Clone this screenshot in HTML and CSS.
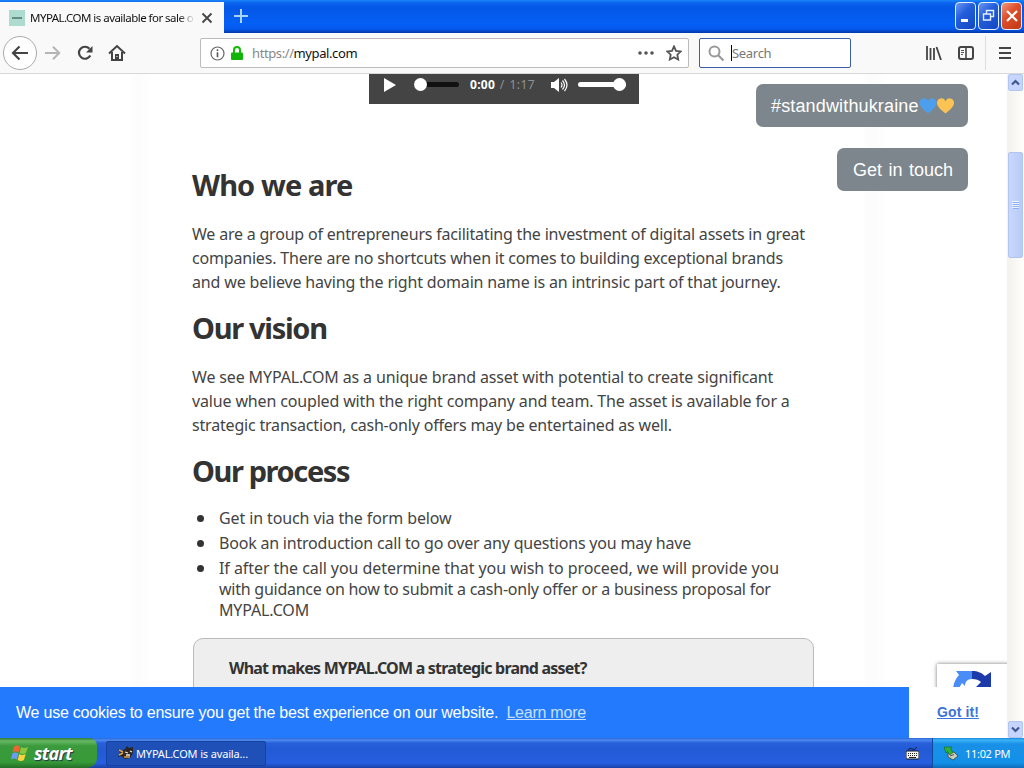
FILE: index.html
```
<!DOCTYPE html>
<html lang="en">
<head>
<meta charset="utf-8"/>
<title>MYPAL.COM is available for sale</title>
<link rel="stylesheet" href="styles.css">
</head>

<body>
<div class="titlebar">
    <div class="tab">
        <span class="favicon"><i></i></span>
        <span class="tab-title">MYPAL.COM is available for sale o</span>
        <svg width="12" height="12" viewBox="0 0 12 12"><path d="M1.5 1.5l9 9M10.5 1.5l-9 9" stroke="#444" stroke-width="1.8"/></svg>
    </div>
    <svg class="newtab" width="14" height="14" viewBox="0 0 14 14"><path d="M7 0v14M0 7h14" stroke="#a9d4ff" stroke-width="2"/></svg>
    <div class="winbtns">
        <span class="winbtn"><svg width="20" height="28" viewBox="0 0 20 28"><path d="M5 18.5h7" stroke="#fff" stroke-width="3"/></svg></span>
        <span class="winbtn"><svg width="20" height="28" viewBox="0 0 20 28"><path d="M7.500 11.500v-3h7v6h-3M4.500 12h7v6h-7z" fill="none" stroke="#e4efff" stroke-width="1.400"/></svg></span>
        <span class="winbtn close"><svg width="20" height="28" viewBox="0 0 20 28"><path d="M5 9l10 10M15 9L5 19" stroke="#fff" stroke-width="2.200"/></svg></span>
    </div>
</div>

<div class="toolbar">
    <div class="nav">
        <span class="back"><svg width="18" height="16" viewBox="0 0 18 16"><path d="M17 8H2M8.500 1.500L2 8l6.500 6.500" fill="none" stroke="#444" stroke-width="2.200"/></svg></span>
        <svg width="18" height="16" viewBox="0 0 18 16"><path d="M1 8h14M9 1.800L15.200 8 9 14.200" fill="none" stroke="#b5b5b5" stroke-width="2"/></svg>
        <svg width="18" height="18" viewBox="0 0 18 18"><path d="M14.300 11.500A6 6 0 1 1 13.500 4.800" fill="none" stroke="#444" stroke-width="2.200"/><path d="M16.500 2v6.500H10z" fill="#444"/></svg>
        <svg width="18" height="18" viewBox="0 0 18 18"><path d="M1 9.500L9 2l8 7.500M4 8v8h10V8" fill="none" stroke="#444" stroke-width="2"/><path d="M7 16v-6h4v6z" fill="#444"/><path d="M8.500 12.500h1" stroke="#fff"/></svg>
    </div>
    <div class="urlbar">
        <svg width="15" height="15" viewBox="0 0 15 15"><circle cx="7.500" cy="7.500" r="6.500" fill="none" stroke="#666" stroke-width="1.200"/><path d="M7.500 3.200v1.800M7.500 6.300v5" stroke="#555" stroke-width="1.600"/></svg>
        <svg class="lock" width="12" height="14" viewBox="0 0 12 14"><path d="M3 7V4a3 3 0 0 1 6 0v3" fill="none" stroke="#12bc00" stroke-width="2"/><rect y="6.500" width="12" height="7.500" rx="1" fill="#12b40a"/></svg>
        <span class="url"><em>https://</em>mypal.com</span>
        <svg class="dots" width="16" height="4" viewBox="0 0 16 4"><g fill="#555"><circle cx="2" cy="2" r="1.800"/><circle cx="8" cy="2" r="1.800"/><circle cx="14" cy="2" r="1.800"/></g></svg>
        <svg class="star" width="16" height="16" viewBox="0 0 16 16"><path d="M8 1.400l2 4.400 4.800.6-3.500 3.300.9 4.800L8 12.200l-4.200 2.300.9-4.800L1.200 6.400 6 5.800z" fill="none" stroke="#555" stroke-width="1.800"/></svg>
    </div>
    <div class="search">
        <svg width="17" height="17" viewBox="0 0 17 17"><circle cx="6.500" cy="6.500" r="5" fill="none" stroke="#999" stroke-width="2"/><path d="M10 10l5.500 5.500" stroke="#999" stroke-width="2.200"/></svg>
        <span class="caret"></span><span>Search</span>
    </div>
    <div class="tools">
        <svg width="16" height="14" viewBox="0 0 16 14"><path d="M1 0v14M4.500 2v12M8 2v12M10.500 1l4.500 13" stroke="#444" stroke-width="1.800"/></svg>
        <svg width="16" height="14" viewBox="0 0 16 14"><rect x="1" y="1" width="14" height="12" rx="2" fill="none" stroke="#444" stroke-width="2"/><path d="M8 1v12" stroke="#444" stroke-width="1.600"/><path d="M3 4.500h3M3 6.500h3M3 8.500h2" stroke="#555"/></svg>
        <span class="sep"></span>
        <svg width="12" height="12" viewBox="0 0 12 12"><path d="M0 1h12M0 6h12M0 11h12" stroke="#444" stroke-width="2"/></svg>
    </div>
</div>

<div class="viewport">
    <div class="page">
        <div class="audio">
            <svg width="12" height="14" viewBox="0 0 12 14"><path d="M0 0l12 7-12 7z" fill="#fff"/></svg>
            <span class="track"><i></i></span>
            <span class="time"><b>0:00</b> / 1:17</span>
            <svg width="17" height="14" viewBox="0 0 17 14"><path d="M0 4h3l5-4v14l-5-4H0z" fill="#fff"/><path d="M10 4.500q2 2.500 0 5M11.500 2.500q4 4.500 0 9M13.500 1q5 6 0 12" fill="none" stroke="#fff" stroke-width="1.200"/></svg>
            <span class="volume"><i></i></span>
        </div>
        <h2>Who we are</h2>
        <p>
            <span class="l1">We are a group of entrepreneurs facilitating the investment of digital assets in great</span><br>
            <span class="l2">companies. There are no shortcuts when it comes to building exceptional brands</span><br>
            <span class="l3">and we believe having the right domain name is an intrinsic part of that journey.</span>
        </p>
        <h2 class="vision">Our vision</h2>
        <p>
            <span class="l4">We see MYPAL.COM as a unique brand asset with potential to create significant</span><br>
            <span class="l5">value when coupled with the right company and team. The asset is available for a</span><br>
            <span class="l6">strategic transaction, cash-only offers may be entertained as well.</span>
        </p>
        <h2 class="process">Our process</h2>
        <ul>
            <li><span class="l7">Get in touch via the form below</span></li>
            <li><span class="l8">Book an introduction call to go over any questions you may have</span></li>
            <li>
                <span class="l9">If after the call you determine that you wish to proceed, we will provide you</span><br>
                <span class="l10">with guidance on how to submit a cash-only offer or a business proposal for</span><br>
                <span class="l11">MYPAL.COM</span>
            </li>
        </ul>
        <div class="faq">What makes MYPAL.COM a strategic brand asset?</div>

        <div class="floating">
            <a class="ukraine">#standwithukraine<svg width="36" height="16" viewBox="0 0 36 16"><path d="M9 15.500C3 11 .5 8 .5 4.800a4.400 4.400 0 0 1 8.500-1.600 4.400 4.400 0 0 1 8.500 1.600C17.500 8 15 11 9 15.500z" fill="#4d9fee"/><path d="M26.500 15.500c-6-4.500-8.500-7.500-8.500-10.700a4.400 4.400 0 0 1 8.500-1.600A4.400 4.400 0 0 1 35 4.800c0 3.200-2.500 6.200-8.500 10.700z" fill="#fbc254"/></svg></a>
            <a class="touch">Get in touch</a>
        </div>
        <div class="recaptcha"><svg width="38" height="36" viewBox="0 0 38 36"><path d="M0 18C1 12 3 8 6 5L3 1h16v8c-5 0-7 3-7 7l-3-3-3 5z" fill="#4a8df6"/><path d="M19 1c6 0 10 2 13 5l6-4v16H22l6-6c-2-2-5-3-9-3z" fill="#1c3aa9"/></svg></div>
        <div class="cookies">
            <div class="message"><span>We use cookies to ensure you get the best experience on our website.</span> <a>Learn more</a></div>
            <div class="gotit"><a>Got it!</a></div>
        </div>
    </div>
    <div class="scrollbar">
        <span class="arrow"><svg width="9" height="7" viewBox="0 0 9 7"><path d="M1 5.500L4.500 2 8 5.500" fill="none" stroke="#40578f" stroke-width="2.200"/></svg></span>
        <span class="thumb"><svg width="7" height="8" viewBox="0 0 7 8"><path d="M0 .5h7M0 2.500h7M0 4.500h7M0 6.500h7" stroke="#eef4fe"/><path d="M1 1.500h6M1 3.500h6M1 5.500h6M1 7.500h6" stroke="#8cb0f8"/></svg></span>
        <span class="arrow"><svg width="9" height="7" viewBox="0 0 9 7"><path d="M1 1.500L4.500 5 8 1.500" fill="none" stroke="#40578f" stroke-width="2.200"/></svg></span>
    </div>
</div>

<div class="taskbar">
    <div class="start">
        <svg width="18" height="18" viewBox="0 0 18 18"><path d="M3 2.500q3-2 6 0L7.500 8.500q-3-1.800-6 0z" fill="#f0652f"/><path d="M10 3q3 1.800 7 0l-2 6q-3 1.800-6.500 0z" fill="#8cc63e"/><path d="M1.300 9.500q3-1.800 6 0l-1.500 6q-3-1.800-5.800 0z" fill="#6c9df5"/><path d="M8.200 10q3 1.800 6.500 0l-1.700 6q-3 1.800-6.300 0z" fill="#fbd33c"/></svg>
        <span>start</span>
    </div>
    <div class="task">
        <svg width="16" height="14" viewBox="0 0 16 14"><path d="M0 3l4 2 3-2 2-3 2 2 4-1v6l-3 5-5 1-4-3-3 1 2-4z" fill="#2b2523"/><path d="M1 4l4 2M1 9l4-2M6 11l6 0" stroke="#e0a04c" stroke-width="1.500"/><path d="M7 6l3 1M12 5l2 1M8 9h4" stroke="#f5eadb" stroke-width="1.300"/></svg>
        <span>MYPAL.COM is availa...</span>
    </div>
    <svg class="keyboard" width="13" height="13" viewBox="0 0 13 13"><path d="M2 3q2-3 4-1t5-2" fill="none" stroke="#111a3c"/><rect y="4" width="13" height="8" rx="1" fill="#f5f5ee" stroke="#101830"/><path d="M2 6.500h9M2 8.500h9" stroke="#222" stroke-dasharray="1 1"/><path d="M3 10.500h7" stroke="#222"/></svg>
    <div class="tray">
        <svg width="14" height="15" viewBox="0 0 14 15"><path d="M4 7l6-1 4 4-5 4-5-3z" fill="#c9cfbd" stroke="#455"/><path d="M6 10l4-1.500" stroke="#555"/><path d="M0 1h8L6.500 3 9 6.500 6 9 3.500 5.500 2 7z" fill="#2fb336" stroke="#14661c" stroke-width=".6"/></svg>
        <span>11:02 PM</span>
    </div>
</div>
</body>
</html>
```
FILE: styles.css
```
* {
    box-sizing: border-box;
}
body {
    margin: 0;
    width: 1024px;
    height: 768px;
    overflow: hidden;
    display: flex;
    flex-direction: column;
    font-family: "Noto Sans", sans-serif;
    color: #333;
    background: #fff;
}
svg {
    flex: none;
    display: block;
}
/* window chrome */
.titlebar {
    height: 33px;
    flex: none;
    display: flex;
    background: linear-gradient(#1b86f8 0, #0a63ee 3px, #0457e6 8px, #0560f5 24px, #0559ec 29px, #0238a8 33px);
}
.tab {
    width: 224px;
    margin-top: 2px;
    padding-left: 9px;
    display: flex;
    align-items: center;
    background: #f9f9fa;
}
.favicon {
    width: 16px;
    height: 16px;
    padding: 7px 3px;
    background: #aedbd0;
}
.favicon i {
    display: block;
    height: 2px;
    background: #648c84;
}
.tab-title {
    width: 165px;
    margin: 0 6px 0 5px;
    white-space: nowrap;
    font: 11.5px "Noto Sans", sans-serif;
    letter-spacing: -0.53px;
    color: #111;
    -webkit-mask-image: linear-gradient(90deg, #000 90%, transparent);
}
.newtab {
    margin: 9px 0 0 10px;
}
.winbtns {
    display: flex;
    gap: 2px;
    margin: 2px 2px 0 auto;
}
.winbtn {
    width: 21px;
    height: 28px;
    overflow: hidden;
    border: 1px solid #e4efff;
    border-radius: 4px;
    background: linear-gradient(135deg, #6c98f5, #245edb 40%, #1347c0);
}
.winbtn svg {
    margin-top: -1px;
}
.winbtn.close {
    background: linear-gradient(135deg, #f09a7c, #df502d 40%, #c03812);
}
.toolbar {
    height: 41px;
    flex: none;
    display: flex;
    align-items: center;
    background: #f9f9fa;
    border-bottom: 1px solid #d8d8d8;
}
.nav {
    width: 200px;
    padding-left: 3px;
    display: flex;
    align-items: center;
    gap: 14px;
}
.back {
    width: 34px;
    height: 34px;
    margin-right: -7px;
    display: flex;
    align-items: center;
    justify-content: center;
    border: 1px solid #aaa;
    border-radius: 50%;
    background: #fff;
}
.urlbar {
    width: 489px;
    height: 30px;
    padding: 0 6px 0 9px;
    display: flex;
    align-items: center;
    background: #fff;
    border: 1px solid #bbb;
    border-radius: 2px;
}
.lock {
    margin: 0 9px 0 6px;
}
.url {
    font-size: 13px;
    letter-spacing: -0.4px;
    color: #111;
}
.url em {
    font-style: normal;
    color: #888;
}
.dots {
    margin-left: auto;
}
.star {
    margin-left: 12px;
}
.search {
    width: 152px;
    height: 30px;
    margin-left: 10px;
    padding-left: 8px;
    display: flex;
    align-items: center;
    background: #fff;
    border: 1px solid #3c5da8;
    border-radius: 2px;
    font-size: 13px;
    letter-spacing: -0.3px;
    color: #777;
}
.caret {
    width: 1px;
    height: 16px;
    margin-left: 6px;
    background: #000;
}
.tools {
    flex: 1;
    height: 40px;
    padding-right: 13px;
    display: flex;
    align-items: center;
    justify-content: flex-end;
    gap: 16px;
}
.sep {
    width: 1px;
    height: 34px;
    margin: 0 -3px 0 -5px;
    background: #ddd;
}
/* web page */
.viewport {
    height: 664px;
    flex: none;
    display: flex;
}
.page {
    position: relative;
    width: 1007px;
    padding-left: 192px;
    overflow: hidden;
    background: linear-gradient(90deg, #fff 130px, #fcfcfc 136px, #fcfcfc 140px, #fff 152px, #fff 862px, #fcfcfc 868px, #fcfcfc 876px, #fff 888px);
}
.audio {
    width: 270px;
    height: 30px;
    margin-left: 177px;
    padding: 0 12px 9px 15px;
    display: flex;
    align-items: center;
    background: #444;
}
.track, .volume {
    width: 45px;
    height: 5px;
    margin: 0 11px 0 18px;
    border-radius: 3px;
    background: #111;
}
.track i, .volume i {
    display: block;
    width: 13px;
    height: 13px;
    margin: -4px 0 0 0;
    border-radius: 50%;
    background: #fff;
}
.volume {
    width: 48px;
    margin: 0 0 0 10px;
    background: #fff;
}
.volume i {
    margin-left: 35px;
}
.time {
    width: 81px;
    font-size: 12px;
    letter-spacing: 0.5px;
    word-spacing: 1px;
    color: #919191;
    white-space: nowrap;
}
.time b {
    letter-spacing: 0.3px;
    color: #fff;
}
h2 {
    margin: 61px 0 17px;
    height: 40px;
    font-size: 29px;
    line-height: 40px;
    letter-spacing: -0.9px;
}
.vision, .process {
    margin-top: 14px;
    letter-spacing: -1.3px;
}
.process {
    letter-spacing: -1.4px;
}
p {
    margin: 0;
    font-size: 16px;
    line-height: 24px;
    color: #444;
    white-space: nowrap;
}
.l1 { letter-spacing: -0.205px; }
.l2 { letter-spacing: -0.186px; }
.l3 { letter-spacing: -0.162px; }
.l4 { letter-spacing: -0.142px; }
.l5 { letter-spacing: -0.152px; }
.l6 { letter-spacing: -0.188px; }
.l7 { letter-spacing: -0.11px; }
.l8 { letter-spacing: -0.206px; }
.l9 { letter-spacing: -0.066px; }
.l10 { letter-spacing: -0.247px; }
.l11 { letter-spacing: -0.15px; }
ul {
    margin: 0 0 17px;
    padding-left: 4px;
    list-style: none;
    font-size: 16px;
    line-height: 21px;
    color: #444;
    white-space: nowrap;
}
li {
    margin-bottom: 4px;
    padding-left: 23px;
}
li::before {
    content: "";
    float: left;
    width: 7px;
    height: 7px;
    margin: 7px 0 0 -22px;
    border-radius: 50%;
    background: #333;
}
.faq {
    width: 621px;
    height: 90px;
    margin-left: 1px;
    padding: 17px 35px;
    border: 1px solid #bbb;
    border-radius: 10px;
    background: #eee;
    font-size: 16px;
    font-weight: bold;
    line-height: 24px;
    letter-spacing: -0.79px;
}
.floating {
    position: absolute;
    top: 10px;
    right: 39px;
    display: flex;
    flex-direction: column;
    align-items: flex-end;
    gap: 21px;
    font: 18px/43px "Liberation Sans", sans-serif;
    letter-spacing: 0.15px;
    color: #fff;
}
.ukraine, .touch {
    width: 212px;
    height: 43px;
    padding: 2px 0 0 15px;
    display: flex;
    align-items: center;
    border-radius: 7px;
    background: #7d868c;
}
.ukraine svg {
    margin-top: -2px;
}
.touch {
    width: 131px;
    padding-left: 16px;
    letter-spacing: 0;
    word-spacing: 1.5px;
}
.recaptcha {
    position: absolute;
    left: 937px;
    top: 590px;
    width: 80px;
    height: 60px;
    padding: 6px 16px;
    background: #fff;
    box-shadow: 0 0 4px #777;
}
.cookies {
    position: absolute;
    left: 0;
    right: 0;
    bottom: 0;
    height: 51px;
    display: flex;
    font: 16px/51px "Liberation Sans", sans-serif;
}
.message {
    width: 909px;
    padding-left: 16px;
    letter-spacing: -0.23px;
    color: #fff;
    background: #237afc;
}
.message a {
    margin-left: 4px;
    text-decoration: underline;
    color: #c6e0ff;
}
.gotit {
    flex: 1;
    padding-left: 28px;
    background: #fff;
    font-size: 14px;
    font-weight: bold;
    letter-spacing: 0.1px;
    color: #3a74d8;
}
.gotit a {
    text-decoration: underline;
}
.scrollbar {
    width: 17px;
    padding: 0 1px;
    display: flex;
    flex-direction: column;
    background: linear-gradient(90deg, #f3f1ec, #fefefb);
}
.arrow, .thumb {
    height: 17px;
    display: flex;
    align-items: center;
    justify-content: center;
    border: 1px solid #b2c4f0;
    border-radius: 2px;
    background: #c6d5fd;
}
.thumb {
    height: 106px;
    margin: 61px 0 auto;
    background: linear-gradient(90deg, #c9d7fc, #b9cbf8);
}
/* XP taskbar */
.taskbar {
    height: 30px;
    flex: none;
    display: flex;
    align-items: center;
    background: linear-gradient(#2a65d8 0, #4c8cf0 2px, #2860da 5px, #2259d5 12px, #265fe0 25px, #1941a5 30px);
    color: #fff;
    font-size: 11px;
}
.start {
    width: 97px;
    height: 30px;
    padding-left: 11px;
    display: flex;
    align-items: center;
    gap: 5px;
    border-radius: 0 8px 10px 0;
    background: linear-gradient(#2f7a34 0, #68b865 3px, #3a9a3c 8px, #379a38 24px, #226f26 30px);
    font: italic bold 18px "Open Sans", sans-serif;
    letter-spacing: -0.7px;
    text-shadow: 1px 1px 1px #234;
}
.task {
    width: 160px;
    height: 25px;
    margin-left: 9px;
    padding-left: 11px;
    display: flex;
    align-items: center;
    gap: 2px;
    border: 1px solid #17429f;
    border-radius: 2px;
    background: #1e50b8;
    letter-spacing: -0.15px;
    white-space: nowrap;
}
.keyboard {
    margin-left: auto;
}
.tray {
    width: 92px;
    height: 30px;
    margin-left: 13px;
    padding-left: 11px;
    display: flex;
    align-items: center;
    gap: 7px;
    border-left: 1px solid #0f4a9c;
    background: linear-gradient(#1a86dc 0, #3cb4f5 2px, #1a90e8 6px, #1290e8 25px, #0f6bb8 30px);
    letter-spacing: -0.3px;
    white-space: nowrap;
}
```
